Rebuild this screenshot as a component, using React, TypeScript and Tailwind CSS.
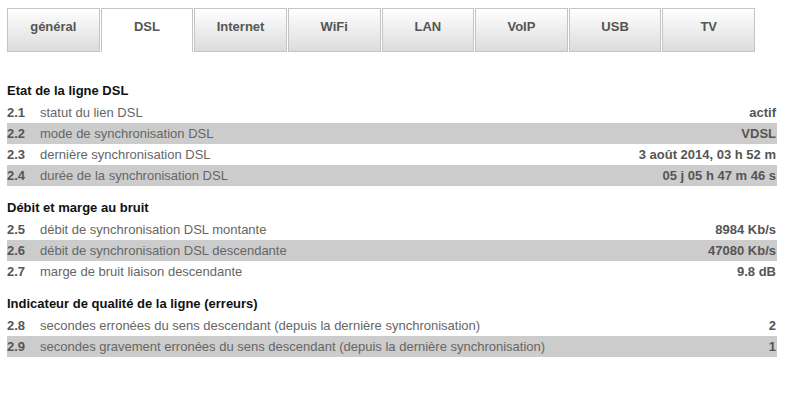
const tabs = ["général", "DSL", "Internet", "WiFi", "LAN", "VoIP", "USB", "TV"];

type Row = { id: string; label: string; value: string };

const sections: { title: string; rows: Row[] }[] = [
  {
    title: "Etat de la ligne DSL",
    rows: [
      { id: "2.1", label: "statut du lien DSL", value: "actif" },
      { id: "2.2", label: "mode de synchronisation DSL", value: "VDSL" },
      { id: "2.3", label: "dernière synchronisation DSL", value: "3 août 2014, 03 h 52 m" },
      { id: "2.4", label: "durée de la synchronisation DSL", value: "05 j 05 h 47 m 46 s" },
    ],
  },
  {
    title: "Débit et marge au bruit",
    rows: [
      { id: "2.5", label: "débit de synchronisation DSL montante", value: "8984 Kb/s" },
      { id: "2.6", label: "débit de synchronisation DSL descendante", value: "47080 Kb/s" },
      { id: "2.7", label: "marge de bruit liaison descendante", value: "9.8 dB" },
    ],
  },
  {
    title: "Indicateur de qualité de la ligne (erreurs)",
    rows: [
      { id: "2.8", label: "secondes erronées du sens descendant (depuis la dernière synchronisation)", value: "2" },
      { id: "2.9", label: "secondes gravement erronées du sens descendant (depuis la dernière synchronisation)", value: "1" },
    ],
  },
];

export default function App() {
  return (
    <div className="min-h-[399px] bg-white pl-[7px] pt-[8px] text-[13px] font-['Liberation_Sans',Arial,sans-serif]">
      <div className="flex w-[748px] gap-px">
        {tabs.map((t) =>
          t === "DSL" ? (
            <div
              key={t}
              className="flex h-[44px] flex-1 items-start justify-center border border-b-0 border-[#c4c4c4] bg-white pt-[8px] font-bold text-[#555]"
            >
              {t}
            </div>
          ) : (
            <div
              key={t}
              className="flex h-[44px] flex-1 items-start justify-center border border-[#c4c4c4] bg-gradient-to-b from-white to-[#dcdcdc] pt-[8px] font-bold text-[#555]"
            >
              {t}
            </div>
          )
        )}
      </div>

      <div className="mt-[28px] w-[770px]">
        {sections.map((s, si) => (
          <div key={s.title} className={si > 0 ? "mt-[11px]" : ""}>
            <div className="flex h-[22px] items-center font-bold text-[#111]">{s.title}</div>
            {s.rows.map((r, ri) => (
              <div
                key={r.id}
                className={`flex h-[21px] items-center ${ri % 2 === 1 ? "bg-[#cccccc]" : ""}`}
              >
                <span className="w-[33px] shrink-0 font-bold text-[#555]">{r.id}</span>
                <span className="flex-1 text-[#666]">{r.label}</span>
                <span className="pr-[1px] font-bold text-[#555]">{r.value}</span>
              </div>
            ))}
          </div>
        ))}
      </div>
    </div>
  );
}
